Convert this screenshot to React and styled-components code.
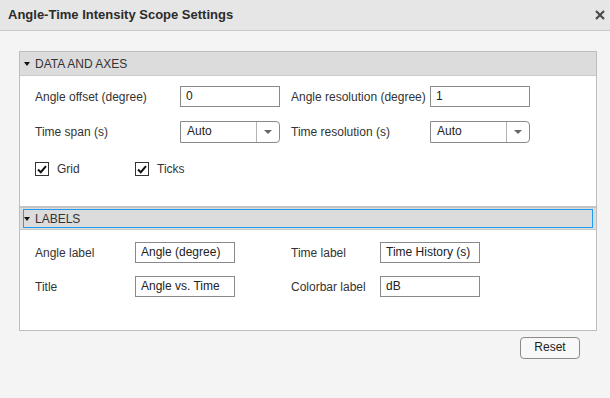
import React from 'react'
import styled, { createGlobalStyle } from 'styled-components'

const Global = createGlobalStyle`
  html, body {
    margin: 0;
    padding: 0;
    background: #f4f4f4;
    font-family: "Liberation Sans", Arial, sans-serif;
    font-size: 12px;
    color: #333;
  }
`

const Window = styled.div`
  width: 610px;
  height: 398px;
  background: #f4f4f4;
  display: flex;
  flex-direction: column;
`

const TitleBar = styled.div`
  height: 30px;
  border-bottom: 1px solid #c9c9c9;
  background: #e6e6e6;
  display: flex;
  align-items: center;
  justify-content: space-between;
  padding: 0 4px 0 8px;
  box-sizing: border-box;
  height: 31px;
`

const Title = styled.div`
  font-size: 13px;
  font-weight: bold;
  color: #2b2b2b;
  margin-top: -1px;
`

const Close = styled.div`
  width: 12px;
  height: 12px;
  display: flex;
  margin-top: -1px;
`

const Body = styled.div`
  padding: 20px 13px 0 19px;
  display: flex;
  flex-direction: column;
`

const Panel = styled.div`
  border: 1px solid #bdbdbd;
  background: #fff;
`

const Header = styled.div`
  position: relative;
  height: ${p => p.$h}px;
  background: #dcdcdc;
  border-top: ${p => (p.$thick ? '2px solid #c4c4c4' : 'none')};
  border-bottom: 1px solid #cacaca;
  display: flex;
  align-items: center;
  padding-left: 4px;
  color: #333;
  font-size: 12px;
  ${p =>
    p.$focused &&
    `
    &::after {
      content: '';
      position: absolute;
      left: 3px;
      right: 3px;
      top: 1px;
      bottom: 1px;
      border: 1px solid #1e9bf0;
    }
  `}
`

const Caret = styled.span`
  width: 0;
  height: 0;
  border-left: 3.5px solid transparent;
  border-right: 3.5px solid transparent;
  border-top: 4px solid #111;
  margin: 1px 5px 0 0;
`

const Grid = styled.div`
  display: grid;
  grid-template-columns: ${p => p.$cols};
  grid-auto-rows: ${p => p.$rows};
  row-gap: ${p => p.$gap}px;
  align-items: center;
  padding: ${p => p.$pad};
`

const Label = styled.span`
  margin-left: ${p => p.$offset || 0}px;
  color: #333;
  white-space: nowrap;
`

const TextBox = styled.input`
  box-sizing: border-box;
  width: 100px;
  height: 21px;
  border: 1px solid #8a8a8a;
  padding: 0 5px 2px;
  font-family: "Liberation Sans", Arial, sans-serif;
  font-size: 12px;
  color: #222;
  background: #fff;
  outline: none;
`

const Select = styled.div`
  box-sizing: border-box;
  width: 100px;
  height: 22px;
  border: 1px solid #8a8a8a;
  border-radius: 0 4px 4px 0;
  display: flex;
  background: #fff;
`

const SelectValue = styled.span`
  flex: 1;
  padding: 0 6px 3px;
  display: flex;
  align-items: center;
  color: #222;
`

const SelectArrow = styled.span`
  width: 22px;
  border-left: 1px solid #b4b4b4;
  display: flex;
  align-items: center;
  justify-content: center;
  &::before {
    content: '';
    border-left: 4px solid transparent;
    border-right: 4px solid transparent;
    border-top: 4px solid #666;
  }
`

const Checks = styled.div`
  display: flex;
  padding: 19px 0 30px 15px;
`

const Check = styled.label`
  width: 100px;
  display: flex;
  align-items: center;
  gap: 8px;
  color: #333;
`

const Box = styled.span`
  box-sizing: border-box;
  width: 14px;
  height: 14px;
  border: 1px solid #333;
  background: #fff;
  display: flex;
  align-items: center;
  justify-content: center;
`

const Footer = styled.div`
  display: flex;
  justify-content: flex-end;
  padding: 6px 17px 0 0;
`

const Button = styled.button`
  width: 60px;
  height: 22px;
  border: 1px solid #8a8a8a;
  border-radius: 4px;
  background: #f8f8f8;
  font-family: "Liberation Sans", Arial, sans-serif;
  font-size: 12px;
  color: #222;
  padding: 0 0 2px;
`

const Select_ = ({ value }) => (
  <Select>
    <SelectValue>{value}</SelectValue>
    <SelectArrow />
  </Select>
)

const CheckItem = ({ label }) => (
  <Check>
    <Box>
      <svg width="10" height="9" viewBox="0 0 10 9">
        <path d="M1 4.5 L3.8 7.2 L9 1.2" fill="none" stroke="#111" strokeWidth="2" />
      </svg>
    </Box>
    {label}
  </Check>
)

export default function App() {
  return (
    <>
      <Global />
      <Window>
        <TitleBar>
          <Title>Angle-Time Intensity Scope Settings</Title>
          <Close>
            <svg width="12" height="12" viewBox="0 0 12 12">
              <path d="M2 2 L10 10 M10 2 L2 10" stroke="#4a4a4a" strokeWidth="2.2" />
            </svg>
          </Close>
        </TitleBar>
        <Body>
          <Panel>
            <Header $h={23}>
              <Caret />
              DATA AND AXES
            </Header>
            <Grid $cols="145px 100px 150px 100px" $rows="auto" $gap={14} $pad="10px 0 0 15px">
              <Label>Angle offset (degree)</Label>
              <TextBox defaultValue="0" readOnly />
              <Label $offset={11}>Angle resolution (degree)</Label>
              <TextBox defaultValue="1" readOnly />
              <Label>Time span (s)</Label>
              <Select_ value="Auto" />
              <Label $offset={11}>Time resolution (s)</Label>
              <Select_ value="Auto" />
            </Grid>
            <Checks>
              <CheckItem label="Grid" />
              <CheckItem label="Ticks" />
            </Checks>
            <Header $h={21} $thick $focused>
              <Caret />
              LABELS
            </Header>
            <Grid $cols="100px 100px 145px 100px" $rows="21px" $gap={13} $pad="12px 0 33px 15px">
              <Label>Angle label</Label>
              <TextBox defaultValue="Angle (degree)" readOnly />
              <Label $offset={56}>Time label</Label>
              <TextBox defaultValue="Time History (s)" readOnly />
              <Label>Title</Label>
              <TextBox defaultValue="Angle vs. Time" readOnly />
              <Label $offset={56}>Colorbar label</Label>
              <TextBox defaultValue="dB" readOnly />
            </Grid>
          </Panel>
          <Footer>
            <Button>Reset</Button>
          </Footer>
        </Body>
      </Window>
    </>
  )
}
